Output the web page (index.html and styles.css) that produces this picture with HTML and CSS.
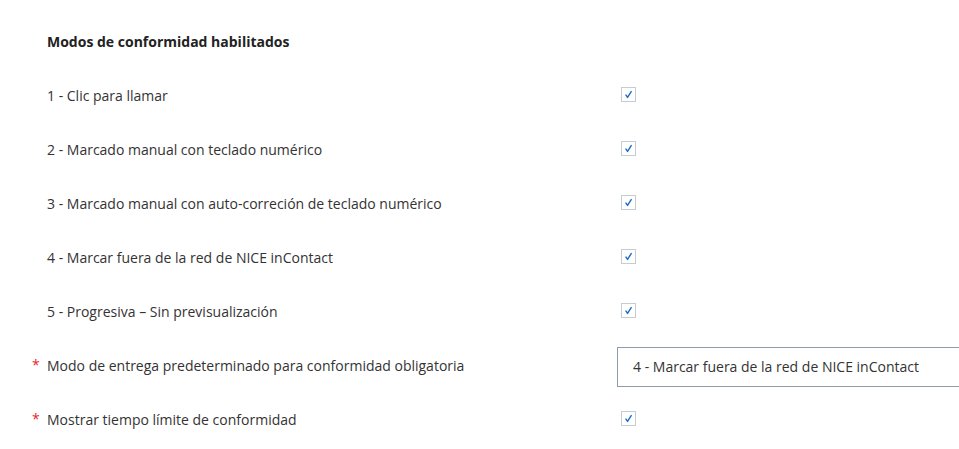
FILE: index.html
```html
<!DOCTYPE html>
<html>
  <head>
    <link rel="stylesheet" href="styles.css">
  </head>
  <body>
    <div class="panel">
      <h3 class="title">Modos de conformidad habilitados</h3>

      <div class="rows">
        <span class="marker"></span>
        <span class="label">1 - Clic para llamar</span>
        <span class="control"><span class="check"><svg viewBox="0 0 15 15"><path d="M4.6 8.2 L6.4 10.8 L10.6 4.2"/></svg></span></span>

        <span class="marker"></span>
        <span class="label">2 - Marcado manual con teclado numérico</span>
        <span class="control"><span class="check"><svg viewBox="0 0 15 15"><path d="M4.6 8.2 L6.4 10.8 L10.6 4.2"/></svg></span></span>

        <span class="marker"></span>
        <span class="label">3 - Marcado manual con auto-correción de teclado numérico</span>
        <span class="control"><span class="check"><svg viewBox="0 0 15 15"><path d="M4.6 8.2 L6.4 10.8 L10.6 4.2"/></svg></span></span>

        <span class="marker"></span>
        <span class="label">4 - Marcar fuera de la red de NICE inContact</span>
        <span class="control"><span class="check"><svg viewBox="0 0 15 15"><path d="M4.6 8.2 L6.4 10.8 L10.6 4.2"/></svg></span></span>

        <span class="marker"></span>
        <span class="label">5 - Progresiva – Sin previsualización</span>
        <span class="control"><span class="check"><svg viewBox="0 0 15 15"><path d="M4.6 8.2 L6.4 10.8 L10.6 4.2"/></svg></span></span>

        <span class="marker required">*</span>
        <span class="label">Modo de entrega predeterminado para conformidad obligatoria</span>
        <span class="control"><span class="select">4 - Marcar fuera de la red de NICE inContact</span></span>

        <span class="marker required">*</span>
        <span class="label">Mostrar tiempo límite de conformidad</span>
        <span class="control"><span class="check"><svg viewBox="0 0 15 15"><path d="M4.6 8.2 L6.4 10.8 L10.6 4.2"/></svg></span></span>
      </div>
    </div>
  </body>
</html>
```

FILE: styles.css
```css
html,
body {
  margin: 0;
  background: #fff;
  overflow: hidden;
}

body {
  font-family: "Open Sans", "Liberation Sans", sans-serif;
  font-size: 14px;
  line-height: 20px;
  color: #333;
}

.panel {
  padding: 32px 0 0 32px;
}

.title {
  margin: 0 0 17px 15px;
  font-size: 14px;
  line-height: 20px;
  font-weight: 700;
  color: #222;
}

.rows {
  display: grid;
  grid-template-columns: 15px 570px 342px;
  grid-auto-rows: 54px;
  align-items: center;
}

.required {
  color: #e8262d;
  position: relative;
  top: -1px;
}

.label {
  white-space: nowrap;
}

.control {
  display: flex;
  align-items: center;
}

.check {
  width: 13px;
  height: 13px;
  margin-left: 4px;
  border: 1px solid #c4ccd4;
  background: #fff;
  display: flex;
  position: relative;
  top: -2px;
}

.check svg {
  width: 13px;
  height: 13px;
  fill: none;
  stroke: #1f6fc4;
  stroke-width: 1.7;
  stroke-linecap: round;
  stroke-linejoin: round;
}

.select {
  box-sizing: border-box;
  width: 342px;
  height: 40px;
  border: 1px solid #8e9bab;
  border-right: none;
  padding: 0 15px;
  display: flex;
  align-items: center;
  color: #333;
  position: relative;
  top: 1px;
}
```
